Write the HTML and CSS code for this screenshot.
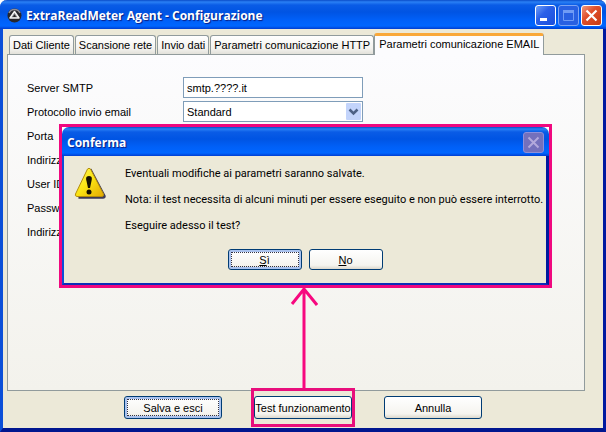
FILE: index.html
```html
<!DOCTYPE html>
<html lang="it">
<head>
<meta charset="utf-8">
<title>ExtraReadMeter Agent - Configurazione</title>
<link rel="stylesheet" href="styles.css">
</head>
<body>
<main class="window">
  <header class="titlebar">
    <svg class="app-icon" viewBox="0 0 15 15" aria-hidden="true">
      <circle cx="7.500" cy="7.500" r="7" fill="#26262c"/>
      <path d="M2 5a6 6 0 0 1 11 0" fill="none" stroke="#8f8f98" stroke-width="1.500"/>
      <path d="M7.500 3.500 12 10H3z" fill="#77777d" stroke="#f4f4f4" stroke-width="1.500" stroke-linejoin="round"/>
      <path d="M7.500 6.500 9 9H6z" fill="#222"/>
    </svg>
    <h1 class="title">ExtraReadMeter Agent - Configurazione</h1>
    <div class="caption-buttons">
      <button class="caption" type="button" aria-label="Riduci a icona">
        <svg viewBox="0 0 19 19"><path d="M4 12h7v3H4z" fill="#fff"/></svg>
      </button>
      <button class="caption caption-off" type="button" aria-label="Ingrandisci" disabled>
        <svg viewBox="0 0 19 19"><path d="M4.500 5.500h10v9h-10zM4 6.500h11" fill="none" stroke="#6f9bf5" stroke-width="1"/><path d="M4 4h11v2H4z" fill="#6f9bf5"/></svg>
      </button>
      <button class="caption caption-close" type="button" aria-label="Chiudi">
        <svg viewBox="0 0 19 19"><path d="m4.500 4.500 10 10m0-10-10 10" stroke="#fff" stroke-width="2.200"/></svg>
      </button>
    </div>
  </header>

  <div class="body">
    <nav class="tabs" role="tablist">
      <button class="tab" type="button" role="tab">Dati Cliente</button>
      <button class="tab" type="button" role="tab">Scansione rete</button>
      <button class="tab" type="button" role="tab">Invio dati</button>
      <button class="tab" type="button" role="tab">Parametri comunicazione HTTP</button>
      <button class="tab tab-active" type="button" role="tab" aria-selected="true">Parametri comunicazione EMAIL</button>
    </nav>
    <form class="panel" role="tabpanel">
      <label for="server">Server SMTP</label>
      <input class="field" id="server" type="text" value="smtp.????.it">
      <label for="protocol">Protocollo invio email</label>
      <select class="field select" id="protocol"><option>Standard</option></select>
      <label for="port">Porta</label>
      <input class="field" id="port" type="text">
      <label for="from">Indirizzo</label>
      <input class="field" id="from" type="text">
      <label for="user">User ID</label>
      <input class="field" id="user" type="text">
      <label for="password">Password</label>
      <input class="field" id="password" type="password">
      <label for="to">Indirizzo</label>
      <input class="field" id="to" type="text">
    </form>
    <footer class="actions">
      <button class="button button-focus" type="button">Salva e esci</button>
      <div class="marked"><button class="button" type="button">Test funzionamento</button></div>
      <button class="button" type="button">Annulla</button>
    </footer>
  </div>

  <section class="dialog" role="dialog" aria-labelledby="dialog-title">
    <header class="titlebar dialog-titlebar">
      <h2 class="title" id="dialog-title">Conferma</h2>
      <button class="caption caption-dim" type="button" aria-label="Chiudi" disabled>
        <svg viewBox="0 0 19 19"><path d="m4.500 4.500 10 10m0-10-10 10" stroke="#b3a9dc" stroke-width="2"/></svg>
      </button>
    </header>
    <div class="dialog-body">
      <div class="message">
        <svg class="warning" viewBox="0 0 32 32" aria-hidden="true">
          <defs><linearGradient id="gold" x1="0" y1="0" x2="1" y2="1"><stop offset="0" stop-color="#fff95a"/><stop offset=".5" stop-color="#fbe312"/><stop offset="1" stop-color="#e3a800"/></linearGradient></defs>
          <path d="M17 2.500 31 29q0 2-2 2H5z" fill="#3d3a55" stroke="#3d3a55" stroke-width="1.500" stroke-linejoin="round"/>
          <path d="M13.500 2q1.500-1.500 3 0L29.500 27q.500 2.500-1.500 2.500H3Q.500 29 1.500 27z" fill="url(#gold)" stroke="#b38d0c" stroke-width="1"/>
          <path d="M15 9c3.500 0 3 3 2.500 5l-1.500 7h-2l-1.500-7c-.500-2-1-5 2.500-5z" fill="#151000"/>
          <circle cx="15" cy="25" r="2.500" fill="#151000"/>
        </svg>
        <div class="text">
          <p>Eventuali modifiche ai parametri saranno salvate.</p>
          <p>Nota: il test necessita di alcuni minuti per essere eseguito e non può essere interrotto.</p>
          <p>Eseguire adesso il test?</p>
        </div>
      </div>
      <div class="choices">
        <button class="button button-small button-focus" type="button"><u>S</u>ì</button>
        <button class="button button-small" type="button"><u>N</u>o</button>
      </div>
    </div>
  </section>

  <svg class="arrow" viewBox="0 0 28 102" aria-hidden="true">
    <path d="M14 102V2M2 17 14 2l13 16" fill="none" stroke="#f7087f" stroke-width="3"/>
  </svg>
</main>
</body>
</html>
```
FILE: styles.css
```css
* { box-sizing: border-box; }

body {
  margin: 0;
  background: #fff;
  color: #000;
  font: 11px/16px "Liberation Sans", Arial, sans-serif;
}

button, input, select { font: inherit; color: inherit; }

.window {
  position: relative;
  display: flex;
  flex-direction: column;
  min-height: 100vh;
  border: solid #0b3fd0;
  border-width: 0 3px 4px;
  border-color: #0b3fd0 #0019a0 #00168f #0b4fd8;
  border-radius: 7px 7px 0 0;
  background: #ece9d8;
}

.titlebar {
  display: flex;
  align-items: center;
  height: 29px;
  margin: 0 -3px;
  padding: 2px 4px 0 7px;
  border-radius: 7px 7px 0 0;
  background: linear-gradient(#0a4cc8 0, #2a80f5 2px, #0a5ce6 5px, #0054e3 12px, #0060f8 20px, #0066ff 26px, #003dd0 29px);
}

.title {
  flex: 1;
  margin: 0;
  color: #fff;
  font: bold 12px/18px "Open Sans", "Noto Sans", sans-serif;
  text-shadow: 1px 1px 1px #0a1c80;
  white-space: nowrap;
}

.app-icon { width: 15px; height: 15px; margin-right: 4px; }

.caption-buttons { display: flex; gap: 2px; }

.caption {
  width: 21px;
  height: 21px;
  padding: 0;
  border: 1px solid #fff;
  border-radius: 3px;
  background: linear-gradient(135deg, #6f9ff8, #2a60e8 40%, #1c4fdc);
}

.caption svg { display: block; width: 19px; height: 19px; }
.caption-off { border-color: #7ba3f4; background: #2860e2; }
.caption-close { background: linear-gradient(135deg, #f09a80, #e0502c 40%, #c83a14); }
.caption-dim { border-color: #8f8fd8; background: #7470bc; }

.body {
  display: flex;
  flex: 1;
  flex-direction: column;
  padding: 4px 18px 9px 4px;
}

.tabs { display: flex; align-items: flex-end; padding-left: 2px; }

.tab {
  height: 19px;
  margin-right: 1px;
  padding: 0 3px;
  border: 1px solid #919b9c;
  border-bottom: 0;
  border-radius: 3px 3px 0 0;
  background: linear-gradient(#fff, #f3f2ee 70%, #e2e1da);
  line-height: 18px;
  white-space: nowrap;
}

.tab-active {
  z-index: 1;
  height: 22px;
  margin: 0 0 -1px -1px;
  padding: 0 4px 3px;
  border-top: 3px solid #f9a83a;
  background: #fcfcfe;
  line-height: 16px;
}

.panel {
  display: grid;
  flex: 1;
  grid-template-columns: 156px 180px;
  grid-auto-rows: 21px;
  align-content: start;
  align-items: center;
  gap: 3px 0;
  padding: 22px 19px;
  border: 1px solid #919b9c;
  background: linear-gradient(#fcfcfe, #f3f2ec);
}

.field {
  width: 100%;
  height: 21px;
  padding: 0 3px;
  border: 1px solid #7f9db9;
  border-radius: 0;
  background: #fff;
}

.select {
  appearance: none;
  background: url("data:image/svg+xml,%3Csvg xmlns='http://www.w3.org/2000/svg' width='15' height='17'%3E%3Crect width='15' height='17' rx='1' fill='%23c3d4fb'/%3E%3Cpath d='M3.5 6.5l4 4 4-4' fill='none' stroke='%234d6185' stroke-width='2.5'/%3E%3C/svg%3E") right 1px center no-repeat #fff;
}

.actions {
  display: flex;
  justify-content: center;
  gap: 32px;
  margin: 5px -14px 0 0;
}

.button {
  width: 98px;
  height: 23px;
  padding: 0;
  border: 1px solid #003c74;
  border-radius: 3px;
  background: linear-gradient(#fff, #f5f4ef 80%, #dcd8cc);
  white-space: nowrap;
}

.button-small { width: 74px; height: 21px; }

.button-focus {
  box-shadow: inset 0 0 0 2px #a9c2ee;
  outline: 1px dotted #334;
  outline-offset: -4px;
}

.marked { position: relative; }

.marked::after {
  position: absolute;
  inset: -8px -3px;
  border: 3px solid #e80e7c;
  content: "";
  pointer-events: none;
}

.dialog {
  position: absolute;
  z-index: 2;
  top: 124px;
  right: 51px;
  left: 56px;
  border: 3px solid #f0087f;
  background: #fff;
}

.dialog-titlebar { margin: 0; padding: 2px 5px 0; }

.dialog-body {
  padding: 10px 10px 13px;
  border: solid #0b4fd8;
  border-width: 0 3px 2px 2px;
  border-color: #0b4fd8 #0019a0 #0c2fb8 #0b4fd8;
  background: #ece9d8;
}

.message { display: flex; gap: 19px; }
.warning { flex: none; width: 32px; height: 32px; margin-top: 1px; }

.text {
  font: 11px/16px Roboto, sans-serif;
  white-space: nowrap;
}

.text p { margin: 0 0 10px; }

.choices { display: flex; justify-content: center; gap: 7px; margin-top: 5px; }

.arrow {
  position: absolute;
  top: 287px;
  left: 287px;
  width: 28px;
  height: 102px;
}
```
